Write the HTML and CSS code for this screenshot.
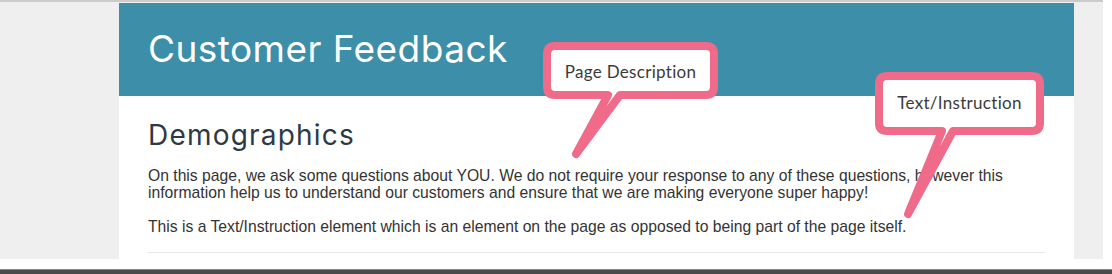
FILE: index.html
```html
<!DOCTYPE html>
<html lang="en">
<head>
    <meta charset="UTF-8">
    <meta name="viewport" content="width=device-width, initial-scale=1.0">
    <title>Customer Feedback</title>
    <link rel="stylesheet" href="styles.css">
</head>
<body>
    <div class="viewport">
        <div class="survey">
            <header class="survey-header">
                <h1>Customer Feedback</h1>
            </header>
            <main class="survey-page">
                <h2>Demographics</h2>
                <p>On this page, we ask some questions about YOU. We do not require your response to any of these questions, however this information help us to understand our customers and ensure that we are making everyone super happy!</p>
                <p>This is a Text/Instruction element which is an element on the page as opposed to being part of the page itself.</p>
                <hr>
            </main>
        </div>
    </div>
    <div class="statusbar"></div>

    <!-- annotation callouts drawn over the page -->
    <svg class="callout callout-desc" width="185" height="125" viewBox="0 0 185 125">
        <path d="M15 7 H166 Q174 7 174 15 V48 Q174 56 166 56 H80 L36 115 L68 56 H15 Q7 56 7 48 V15 Q7 7 15 7 Z"/>
        <text x="90.5" y="39">Page Description</text>
    </svg>
    <svg class="callout callout-text" width="175" height="155" viewBox="0 0 175 155">
        <path d="M15 7 H160 Q168 7 168 15 V54 Q168 62 160 62 H81 L36 145 L70 62 H15 Q7 62 7 54 V15 Q7 7 15 7 Z"/>
        <text x="87.5" y="40">Text/Instruction</text>
    </svg>
</body>
</html>
```

FILE: styles.css
```css
/* survey preview with annotation callouts */
body {
    margin: 0;
    background-color: #fff;
    font-family: "Liberation Sans", Arial, sans-serif;
    color: #333;
}
.viewport {
    width: 1103px;
    height: 259px;
    border-top: 2px solid #cbcbcb;
    background-color: #efefef;
    padding-left: 119px;
    box-sizing: border-box;
    overflow: hidden;
}
.survey {
    width: 955px;
    margin-top: 1px;
    background-color: #fff;
    height: 300px;
}
.survey-header {
    height: 93px;
    box-sizing: border-box;
    padding: 24px 29px 0;
    background-color: #3d8ea8;
}
.survey-header h1 {
    margin: 0;
    font-family: Inter, "DejaVu Sans", sans-serif;
    font-weight: 400;
    font-size: 37px;
    line-height: 44px;
    letter-spacing: 0.45px;
    color: #fff;
}
.survey-page {
    padding: 22px 29px 0;
}
.survey-page h2 {
    margin: 0 0 15px;
    font-family: Inter, "DejaVu Sans", sans-serif;
    font-weight: 400;
    font-size: 28px;
    line-height: 34px;
    letter-spacing: 1.2px;
    color: #2d3a45;
}
.survey-page p {
    margin: 0 0 17px;
    font-size: 15.7px;
    line-height: 17px;
}
.survey-page hr {
    margin: 0;
    border: none;
    border-top: 1px solid #e8e8e8;
}
.statusbar {
    height: 4px;
    margin-top: 10px;
    background-color: #4a4a4a;
    border-top: 1px solid #8a8a8a;
}
.callout {
    position: absolute;
    overflow: visible;
}
.callout path {
    fill: #fff;
    stroke: #f06a8a;
    stroke-width: 8;
    stroke-linejoin: round;
}
.callout text {
    font-family: Lato, sans-serif;
    font-size: 17px;
    letter-spacing: 0.3px;
    fill: #3b3b3b;
    text-anchor: middle;
}
.callout-desc {
    left: 540px;
    top: 39px;
}
.callout-text {
    left: 872px;
    top: 69px;
}
```
